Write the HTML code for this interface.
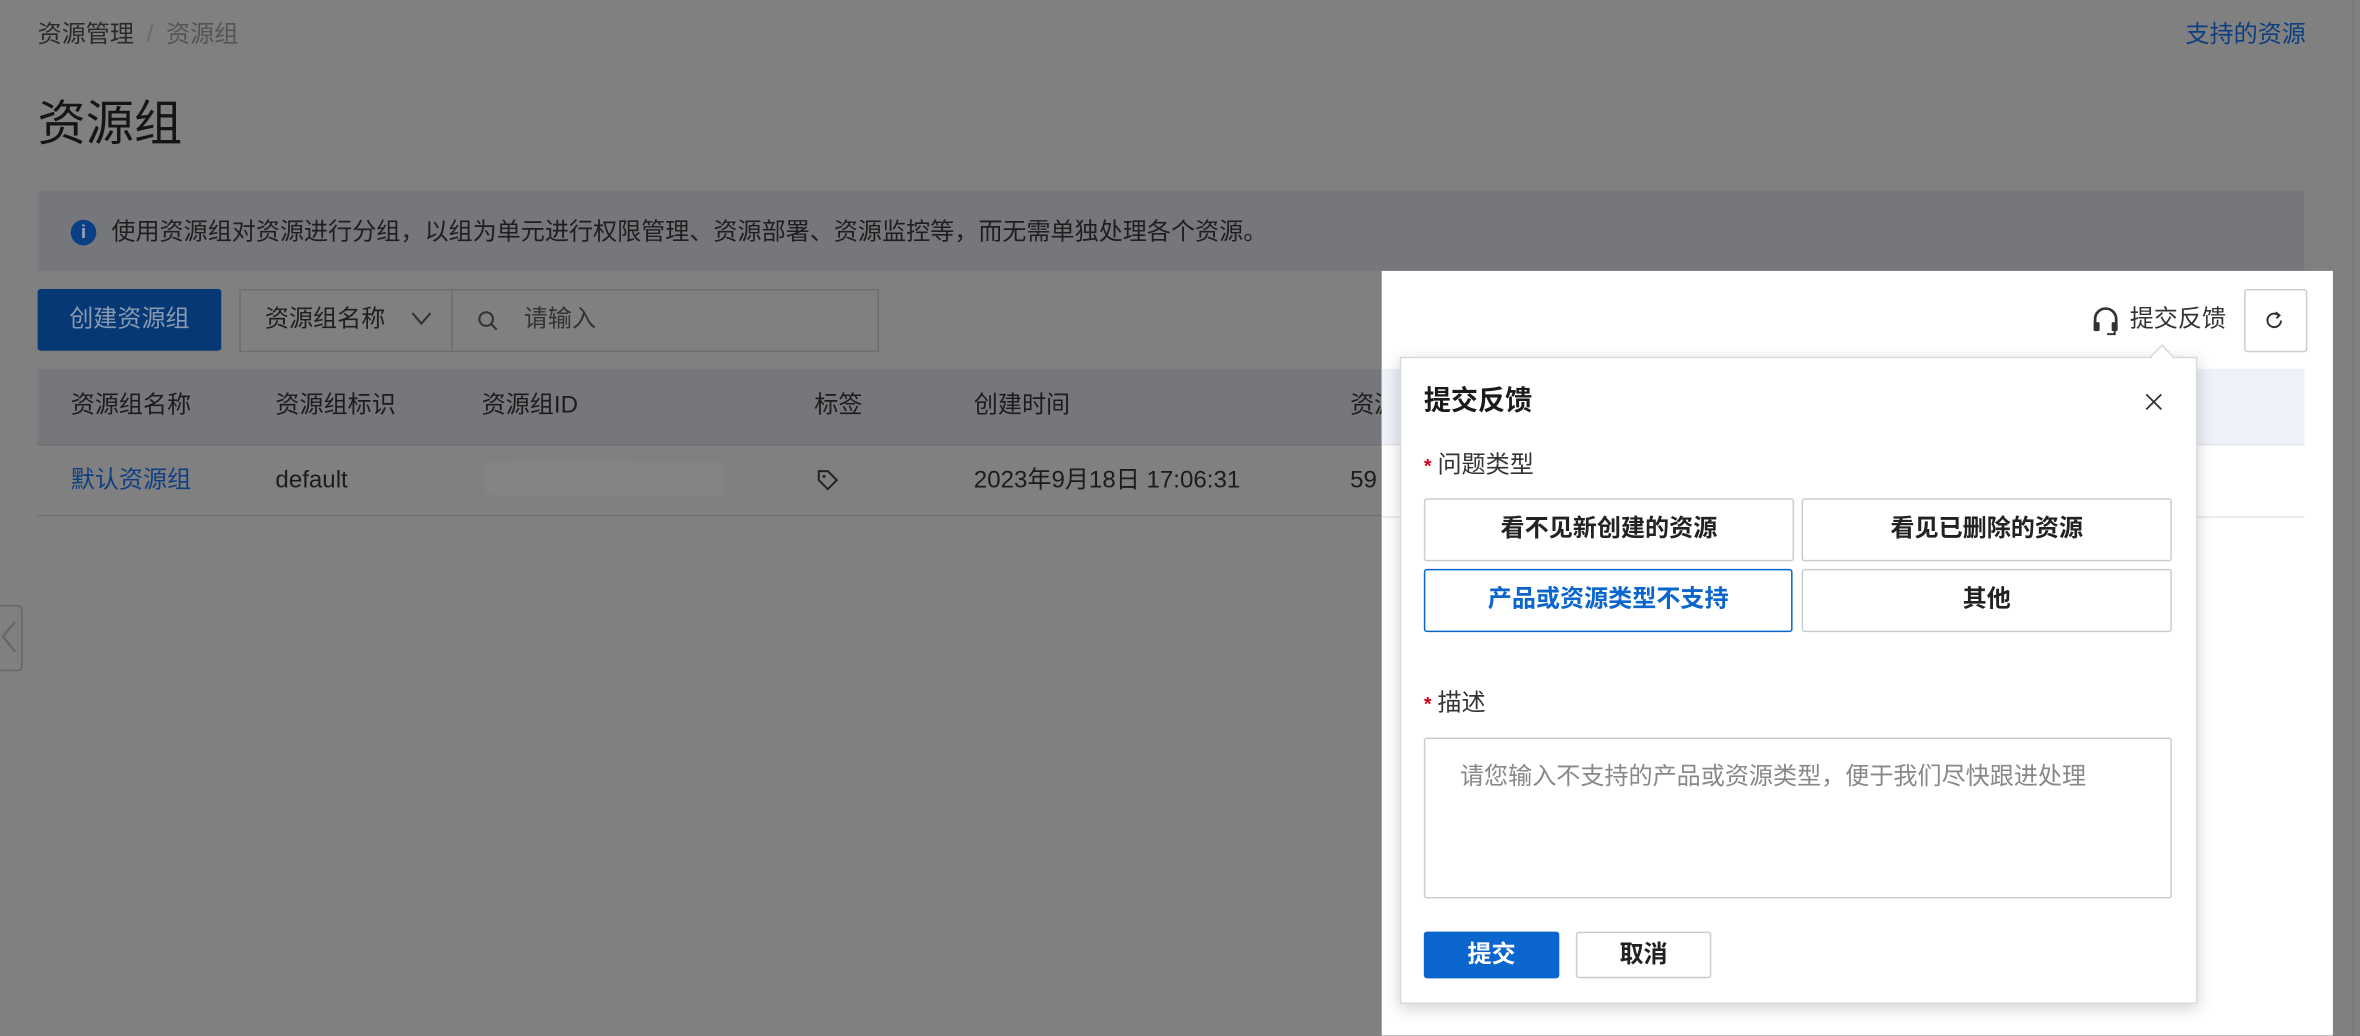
<!DOCTYPE html>
<html><head><meta charset="utf-8"><style>
html,body{margin:0;padding:0;width:2360px;height:1036px;overflow:hidden;background:#808080;}
#w{position:absolute;left:0;top:0;width:1568px;height:688px;transform:scale(1.5051);transform-origin:0 0;font-family:"Liberation Sans","Noto Sans CJK SC",sans-serif;color:#1c1c1c;}
.a{position:absolute;white-space:nowrap;}
.f14{font-size:16px;line-height:18px;}
</style></head><body><div id="w">
<div class="a f14" style="left:25px;top:15px;color:#2a2a2a">资源管理 <span style="color:#6a6a6a;margin:0 4px">/</span> <span style="color:#555">资源组</span></div>
<div class="a f14" style="left:1452px;top:15px;color:#0d3f80">支持的资源</div>
<div style="position:absolute;right:4px;top:0;width:1px;height:688px;background:#747474"></div>
<div class="a" style="left:25px;top:64px;font-size:32px;line-height:37px;color:#151515">资源组</div>
<div class="a" style="left:25px;top:127px;width:1506px;height:53px;background:#76777b"></div>
<div class="a" style="left:47px;top:146px;width:17px;height:17px;border-radius:50%;background:#0a3f85;color:#9ab;font-size:12px;text-align:center;line-height:17px;font-weight:bold">i</div>
<div class="a f14" style="left:74px;top:146px;color:#1e1e1e">使用资源组对资源进行分组，以组为单元进行权限管理、资源部署、资源监控等，而无需单独处理各个资源。</div>
<div class="a f14" style="left:25px;top:192px;width:122px;height:41px;background:#053875;border-radius:2px;color:#8a9ab0;text-align:center;line-height:41px">创建资源组</div>
<div class="a" style="left:159px;top:192px;width:423px;height:40px;border:1px solid #6e6e6e;"></div>
<div class="a" style="left:300px;top:193px;width:1px;height:40px;background:#6e6e6e"></div>
<div class="a f14" style="left:176px;top:204px;color:#1e1e1e">资源组名称</div>
<svg class="a" style="left:272px;top:206px" width="16" height="12"><path d="M2 2 L8 9 L14 2" fill="none" stroke="#333" stroke-width="1.4"/></svg>
<svg class="a" style="left:317px;top:206px" width="14" height="14"><circle cx="6" cy="6" r="4.5" fill="none" stroke="#333" stroke-width="1.4"/><path d="M9.5 9.5 L13 13" stroke="#333" stroke-width="1.4"/></svg>
<div class="a f14" style="left:348px;top:204px;color:#333">请输入</div>
<div class="a" style="left:25px;top:245px;width:1506px;height:50px;background:#76777b"></div>
<div class="a" style="left:25px;top:295px;width:1506px;height:1px;background:#6e6f72"></div>
<div class="a" style="left:25px;top:342px;width:1506px;height:1px;background:#727272"></div>
<div class="a f14" style="left:47px;top:261px">资源组名称</div>
<div class="a f14" style="left:183px;top:261px">资源组标识</div>
<div class="a f14" style="left:320px;top:261px">资源组ID</div>
<div class="a f14" style="left:541px;top:261px">标签</div>
<div class="a f14" style="left:647px;top:261px">创建时间</div>
<div class="a f14" style="left:897px;top:261px">资源</div>
<div class="a f14" style="left:47px;top:311px;color:#0f3f82">默认资源组</div>
<div class="a f14" style="left:183px;top:311px">default</div>
<div class="a" style="left:322px;top:307px;width:160px;height:22px;background:#848484;border-radius:4px;filter:blur(2px)"></div>
<svg class="a" style="left:541px;top:310px" width="18" height="18"><path d="M3 3 L9 3 L15 9 L9 15 L3 9 Z" fill="none" stroke="#222" stroke-width="1.3"/><circle cx="6.5" cy="6.5" r="1" fill="#222"/></svg>
<div class="a f14" style="left:647px;top:311px">2023年9月18日 17:06:31</div>
<div class="a f14" style="left:897px;top:311px">59</div>
<div class="a" style="left:-4px;top:402px;width:17px;height:42px;border:1px solid #666;border-radius:3px"></div>
<svg class="a" style="left:0;top:410px" width="12" height="26"><path d="M10 3 L2 13 L10 23" fill="none" stroke="#666" stroke-width="1.5"/></svg>
<!-- white panel -->
<div class="a" style="left:918px;top:180px;width:632px;height:508px;background:#fff"></div>
<div class="a" style="left:918px;top:245px;width:613px;height:50px;background:#eef1f8"></div>
<div class="a" style="left:918px;top:295px;width:613px;height:1px;background:#e4e6ea"></div>
<div class="a" style="left:918px;top:343px;width:613px;height:1px;background:#e4e6ea"></div>
<svg class="a" style="left:1389px;top:203px" width="20" height="20"><path d="M3 12 V9 a7 7 0 0 1 14 0 V12" fill="none" stroke="#333" stroke-width="1.8"/><rect x="2" y="11" width="4" height="6" rx="1" fill="#333"/><rect x="14" y="11" width="4" height="6" rx="1" fill="#333"/><path d="M16 17 V19 H11" fill="none" stroke="#333" stroke-width="1.4"/></svg>
<div class="a f14" style="left:1415px;top:204px;color:#333">提交反馈</div>
<div class="a" style="left:1491px;top:192px;width:40px;height:40px;border:1px solid #c9ccd2;border-radius:2px"></div>
<svg class="a" style="left:1503px;top:205px" width="16" height="16"><path d="M11 4.5 A4.5 4.5 0 1 0 12.5 8" fill="none" stroke="#333" stroke-width="1.3"/><path d="M9 2.5 L11.5 4.5 L9.5 6.5" fill="none" stroke="#333" stroke-width="1.3"/></svg>
<!-- popover -->
<div class="a" style="left:930px;top:237px;width:528px;height:428px;background:#fff;border:1px solid #d6d9de;box-shadow:0 3px 10px rgba(0,0,0,.18)"></div>
<div class="a" style="left:1431px;top:231px;width:10px;height:10px;background:#fff;border-left:1px solid #d6d9de;border-top:1px solid #d6d9de;transform:rotate(45deg)"></div>
<div class="a" style="left:946px;top:256px;font-size:18px;line-height:21px;font-weight:bold;color:#1a1a1a">提交反馈</div>
<svg class="a" style="left:1424px;top:260px" width="14" height="14"><path d="M2 2 L12 12 M12 2 L2 12" stroke="#333" stroke-width="1.2"/></svg>
<div class="a f14" style="left:946px;top:301px;color:#333"><span style="color:#d0021b;font-size:13px;margin-right:4px;font-weight:bold">*</span>问题类型</div>
<div class="a f14" style="left:946px;top:331px;width:244px;height:40px;border:1px solid #c9ccd2;border-radius:2px;text-align:center;line-height:40px;font-weight:bold;color:#222">看不见新创建的资源</div>
<div class="a f14" style="left:1197px;top:331px;width:244px;height:40px;border:1px solid #c9ccd2;border-radius:2px;text-align:center;line-height:40px;font-weight:bold;color:#222">看见已删除的资源</div>
<div class="a f14" style="left:946px;top:378px;width:243px;height:40px;border:1.5px solid #0a66cc;border-radius:2px;text-align:center;line-height:40px;font-weight:bold;color:#0a66cc">产品或资源类型不支持</div>
<div class="a f14" style="left:1197px;top:378px;width:244px;height:40px;border:1px solid #c9ccd2;border-radius:2px;text-align:center;line-height:40px;font-weight:bold;color:#222">其他</div>
<div class="a f14" style="left:946px;top:459px;color:#333"><span style="color:#d0021b;font-size:13px;margin-right:4px;font-weight:bold">*</span>描述</div>
<div class="a" style="left:946px;top:490px;width:495px;height:105px;border:1px solid #c9ccd2;border-radius:2px"></div>
<div class="a f14" style="left:970px;top:508px;color:#888">请您输入不支持的产品或资源类型，便于我们尽快跟进处理</div>
<div class="a f14" style="left:946px;top:619px;width:90px;height:31px;background:#0a66cc;border-radius:2px;color:#fff;text-align:center;line-height:31px;font-weight:bold">提交</div>
<div class="a f14" style="left:1047px;top:619px;width:88px;height:29px;border:1px solid #c9ccd2;border-radius:2px;color:#222;text-align:center;line-height:29px;font-weight:bold">取消</div>
</div></body></html>
